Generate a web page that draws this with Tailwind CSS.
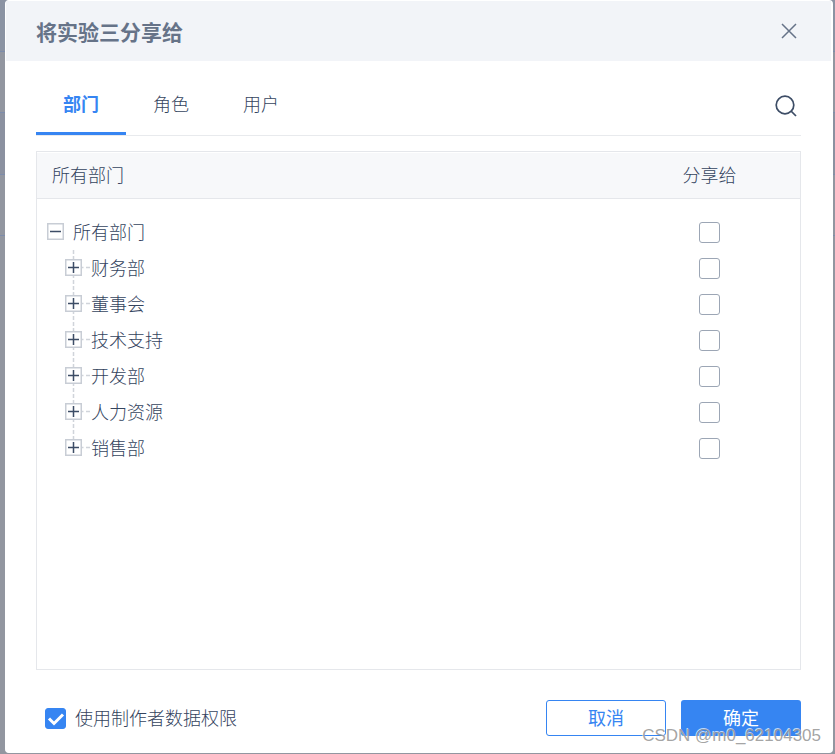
<!DOCTYPE html>
<html lang="zh-CN">
<head>
<meta charset="utf-8">
<meta name="viewport" content="width=device-width, initial-scale=1">
<title>将实验三分享给</title>
<script src="https://cdn.jsdelivr.net/npm/@tailwindcss/browser@4"></script>
</head>
<body class="relative min-h-screen bg-[#9296a0] font-['Noto_Sans_CJK_SC',sans-serif] font-light text-lg leading-7 text-[#34445e]">
<svg class="hidden">
  <symbol id="plus" viewBox="0 0 26 36">
    <rect x="0.750" y="9.750" width="15.500" height="15.500" fill="#fff" stroke="#c8cdd5" stroke-width="1.500"/>
    <path d="M3 17.500h11M8.500 12v11" stroke="#3d4d66" stroke-width="1.500"/>
    <path d="M17 17.500h1.500M21 17.500h4" stroke="#d0d4da" stroke-width="1.500"/>
  </symbol>
</svg>
<!-- page dimmed behind the dialog -->
<div class="absolute inset-0" aria-hidden="true">
  <div class="h-[52px] border-b border-[#7d8cab] bg-[#8b93a3]"></div>
  <div class="h-[61px] border-b border-[#7d8cab]"></div>
  <div class="h-[62px] border-b border-[#7d8cab] bg-[#8b91a0]"></div>
  <div class="h-[61px] border-b border-[#7d8cab]"></div>
</div>
<div class="relative flex min-h-screen pr-[2px] pb-px pl-[5px]">
  <section role="dialog" aria-labelledby="title" class="flex flex-1 flex-col rounded-sm border border-r-2 border-white bg-white">
    <header class="flex h-[60px] items-center justify-between bg-[#f2f4f8] pr-[34px] pl-[30px]">
      <h1 id="title" class="text-[21px] leading-8 font-bold text-[#667388]">将实验三分享给</h1>
      <button type="button" aria-label="关闭"><svg width="16" height="16" viewBox="0 0 16 16" fill="none" stroke="#667388" stroke-width="1.500"><path d="M1 1l14 14M15 1L1 15"/></svg></button>
    </header>
    <main class="flex flex-1 flex-col px-[30px]">
      <div class="flex h-[75px] items-end border-b border-[#e8eaed]">
        <nav role="tablist" class="flex">
          <button type="button" role="tab" aria-selected="true" class="h-[60px] w-[90px] border-b-[3px] border-[#3685f2] pb-[2px] font-bold text-[#3685f2]">部门</button>
          <button type="button" role="tab" aria-selected="false" class="h-[60px] w-[90px] border-b-[3px] border-transparent pb-[2px]">角色</button>
          <button type="button" role="tab" aria-selected="false" class="h-[60px] w-[90px] border-b-[3px] border-transparent pb-[2px]">用户</button>
        </nav>
        <button type="button" aria-label="搜索" class="mr-1 mb-[18px] ml-auto"><svg width="22" height="22" viewBox="0 0 22 22" fill="none" stroke="#3d4d66" stroke-width="1.700"><circle cx="10" cy="10" r="8.800"/><path d="M16 16l5 5"/></svg></button>
      </div>
      <div class="mt-[15px] flex-1 border border-[#e5e7eb] pt-px">
        <table class="w-full table-fixed border-collapse">
          <thead>
            <tr class="h-[45px] border-b border-[#e5e7eb] bg-[#f7f8fa]">
              <th scope="col" class="p-0 pb-[3px] pl-[15px] text-left font-light">所有部门</th>
              <th scope="col" class="w-[181px] p-0 pb-[3px] font-light">分享给</th>
            </tr>
          </thead>
          <tbody>
            <tr class="h-4"><td colspan="2"></td></tr>
            <tr class="h-9">
              <td class="p-0 pl-[10px]"><div class="flex items-center"><button type="button" aria-label="折叠" aria-expanded="true"><svg width="26" height="36" viewBox="0 0 26 36" fill="none"><rect x="0.750" y="9.750" width="15.500" height="15.500" stroke="#c8cdd5" stroke-width="1.500"/><path d="M3 17.500h11" stroke="#3d4d66" stroke-width="1.500"/></svg></button><label for="d0" class="pb-[2px]">所有部门</label></div></td>
              <td class="p-0"><input id="d0" type="checkbox" class="mx-auto block size-[21px] appearance-none rounded-[3px] border border-[#9ca6b5] checked:bg-[#3685f2]"></td>
            </tr>
            <tr class="h-9">
              <td class="p-0 pl-7"><div class="flex items-center"><button type="button" aria-label="展开" aria-expanded="false"><svg width="26" height="36"><path d="M8.500 0v36" stroke="#d0d4da" stroke-width="1.500" stroke-dasharray="4 2"/><use href="#plus"/></svg></button><label for="d1" class="pb-[2px]">财务部</label></div></td>
              <td class="p-0"><input id="d1" type="checkbox" class="mx-auto block size-[21px] appearance-none rounded-[3px] border border-[#9ca6b5] checked:bg-[#3685f2]"></td>
            </tr>
            <tr class="h-9">
              <td class="p-0 pl-7"><div class="flex items-center"><button type="button" aria-label="展开" aria-expanded="false"><svg width="26" height="36"><path d="M8.500 0v36" stroke="#d0d4da" stroke-width="1.500" stroke-dasharray="4 2"/><use href="#plus"/></svg></button><label for="d2" class="pb-[2px]">董事会</label></div></td>
              <td class="p-0"><input id="d2" type="checkbox" class="mx-auto block size-[21px] appearance-none rounded-[3px] border border-[#9ca6b5] checked:bg-[#3685f2]"></td>
            </tr>
            <tr class="h-9">
              <td class="p-0 pl-7"><div class="flex items-center"><button type="button" aria-label="展开" aria-expanded="false"><svg width="26" height="36"><path d="M8.500 0v36" stroke="#d0d4da" stroke-width="1.500" stroke-dasharray="4 2"/><use href="#plus"/></svg></button><label for="d3" class="pb-[2px]">技术支持</label></div></td>
              <td class="p-0"><input id="d3" type="checkbox" class="mx-auto block size-[21px] appearance-none rounded-[3px] border border-[#9ca6b5] checked:bg-[#3685f2]"></td>
            </tr>
            <tr class="h-9">
              <td class="p-0 pl-7"><div class="flex items-center"><button type="button" aria-label="展开" aria-expanded="false"><svg width="26" height="36"><path d="M8.500 0v36" stroke="#d0d4da" stroke-width="1.500" stroke-dasharray="4 2"/><use href="#plus"/></svg></button><label for="d4" class="pb-[2px]">开发部</label></div></td>
              <td class="p-0"><input id="d4" type="checkbox" class="mx-auto block size-[21px] appearance-none rounded-[3px] border border-[#9ca6b5] checked:bg-[#3685f2]"></td>
            </tr>
            <tr class="h-9">
              <td class="p-0 pl-7"><div class="flex items-center"><button type="button" aria-label="展开" aria-expanded="false"><svg width="26" height="36"><path d="M8.500 0v36" stroke="#d0d4da" stroke-width="1.500" stroke-dasharray="4 2"/><use href="#plus"/></svg></button><label for="d5" class="pb-[2px]">人力资源</label></div></td>
              <td class="p-0"><input id="d5" type="checkbox" class="mx-auto block size-[21px] appearance-none rounded-[3px] border border-[#9ca6b5] checked:bg-[#3685f2]"></td>
            </tr>
            <tr class="h-9">
              <td class="p-0 pl-7"><div class="flex items-center"><button type="button" aria-label="展开" aria-expanded="false"><svg width="26" height="36"><path d="M8.500 0v10" stroke="#d0d4da" stroke-width="1.500" stroke-dasharray="4 2"/><use href="#plus"/></svg></button><label for="d6" class="pb-[2px]">销售部</label></div></td>
              <td class="p-0"><input id="d6" type="checkbox" class="mx-auto block size-[21px] appearance-none rounded-[3px] border border-[#9ca6b5] checked:bg-[#3685f2]"></td>
            </tr>
          </tbody>
        </table>
      </div>
    </main>
    <footer class="flex items-center gap-[15px] px-[30px] pt-[30px] pb-4">
      <div class="mr-auto flex items-center gap-[9px] pl-[9px]">
        <span class="grid size-[21px]">
          <input id="perm" type="checkbox" checked class="peer col-start-1 row-start-1 size-[21px] appearance-none rounded-[3px] border border-[#9ca6b5] checked:border-[#3685f2] checked:bg-[#3685f2]">
          <svg class="pointer-events-none invisible col-start-1 row-start-1 peer-checked:visible" width="21" height="21" viewBox="0 0 21 21" fill="none" stroke="#fff" stroke-width="3"><path d="M4 10.500l5 5L18 6.500"/></svg>
        </span>
        <label for="perm" class="pb-[2px]">使用制作者数据权限</label>
      </div>
      <button type="button" class="h-9 w-[120px] rounded-[3px] border border-[#3685f2] bg-white pb-[2px] font-normal text-[#3685f2]">取消</button>
      <button type="button" class="h-9 w-[120px] rounded-[3px] bg-[#3685f2] pb-[2px] font-normal text-white">确定</button>
    </footer>
  </section>
</div>
<div class="pointer-events-none absolute right-[14px] bottom-[6px] font-['Liberation_Sans',sans-serif] text-[17px] leading-6 font-normal text-[#999]/90 [text-shadow:-1px_-1px_0_#ffffffb0]">CSDN @m0_62104305</div>
</body>
</html>
